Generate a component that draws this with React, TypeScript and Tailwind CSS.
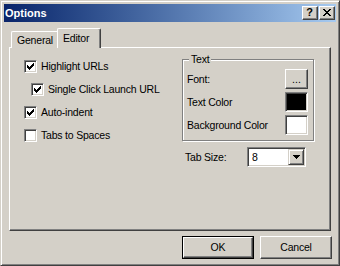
import React from "react";

const FONT = "font-['Liberation_Sans',Arial,sans-serif]";

function CheckMark() {
  const tops = [4, 5, 6, 5, 4, 3, 2];
  return (
    <svg width="11" height="11" shapeRendering="crispEdges" className="block">
      {tops.map((t, i) => (
        <rect key={i} x={2 + i} y={t} width="1" height="3" fill="#000" />
      ))}
    </svg>
  );
}

function Checkbox({ checked }: { checked: boolean }) {
  return (
    <div className="w-[13px] h-[13px] shrink-0 bg-white border border-t-[#808080] border-l-[#808080] border-r-white border-b-white shadow-[inset_1px_1px_0_#404040,inset_-1px_-1px_0_#d4d0c8]">
      {checked && <CheckMark />}
    </div>
  );
}

function CheckRow({ checked, label, indent }: { checked: boolean; label: string; indent?: boolean }) {
  return (
    <div className={`flex items-center h-[13px] ${indent ? "pl-[7px]" : ""}`}>
      <Checkbox checked={checked} />
      <span className="ml-[4px] leading-[13px] whitespace-nowrap">{label}</span>
    </div>
  );
}

function Swatch({ color }: { color: string }) {
  return (
    <div
      className={`w-[23px] h-[20px] border border-t-[#808080] border-l-[#808080] border-r-white border-b-white shadow-[inset_1px_1px_0_#404040,inset_-1px_-1px_0_#d4d0c8] ${color}`}
    />
  );
}

export default function App() {
  return (
    <div
      className={`w-[340px] h-[266px] bg-[#d4d0c8] border border-t-[#d4d0c8] border-l-[#d4d0c8] border-r-[#404040] border-b-[#404040] shadow-[inset_1px_1px_0_#fff,inset_-1px_-1px_0_#808080] p-[3px] flex flex-col text-black text-[10.5px] tracking-[-0.2px] ${FONT}`}
    >
      {/* Title bar */}
      <div className="h-[18px] shrink-0 flex items-center justify-between pl-[1px] pr-[1px] bg-linear-to-r from-[#0a246a] to-[#a6caf0]">
        <span className="text-white font-bold text-[11px] tracking-normal leading-[13px]">Options</span>
        <div className="flex gap-[1px]">
          <div className="w-[16px] h-[14px] bg-[#d4d0c8] border border-t-white border-l-white border-r-[#404040] border-b-[#404040] shadow-[inset_-1px_-1px_0_#808080] flex items-center justify-center">
            <span className="font-bold text-[11px] leading-[11px] tracking-normal -mt-[1px] pr-[1px]">?</span>
          </div>
          <div className="w-[16px] h-[14px] bg-[#d4d0c8] border border-t-white border-l-white border-r-[#404040] border-b-[#404040] shadow-[inset_-1px_-1px_0_#808080] flex items-center justify-center">
            <svg width="8" height="7" viewBox="0 0 8 7" shapeRendering="crispEdges" className="-mt-[1px]">
              {[0, 1, 2, 3, 4, 5, 6].map((i) => (
                <React.Fragment key={i}>
                  <rect x={i} y={i} width="2" height="1" fill="#000" />
                  <rect x={6 - i} y={i} width="2" height="1" fill="#000" />
                </React.Fragment>
              ))}
            </svg>
          </div>
        </div>
      </div>

      {/* Tabs */}
      <div className="flex items-end h-[20px] mt-[6px] ml-[5px] relative z-10">
        <div className="ml-[2px] w-[46px] h-[17px] border-t border-l border-t-white border-l-white rounded-tl-[2px] flex items-start pl-[5px] pt-[2px] bg-[#d4d0c8]">
          <span className="leading-[13px]">General</span>
        </div>
        <div className="w-[44px] h-[20px] border-t border-l border-r border-t-white border-l-white border-r-[#404040] shadow-[inset_-1px_0_0_#808080] rounded-t-[2px] flex items-start pl-[5px] pt-[3px] bg-[#d4d0c8]">
          <span className="leading-[13px]">Editor</span>
        </div>
      </div>

      {/* Panel */}
      <div className="ml-[5px] w-[322px] h-[184px] -mt-[1px] border border-t-white border-l-white border-r-[#404040] border-b-[#404040] shadow-[inset_-1px_-1px_0_#808080] flex">
        <div className="w-[172px] pl-[14px] pt-[12px] flex flex-col gap-[10px]">
          <CheckRow checked label="Highlight URLs" />
          <CheckRow checked indent label="Single Click Launch URL" />
          <CheckRow checked label="Auto-indent" />
          <CheckRow checked={false} label="Tabs to Spaces" />
        </div>
        <div className="pt-[11px] flex flex-col">
          <div className="relative w-[132px] border border-[#808080] shadow-[inset_1px_1px_0_#fff,1px_1px_0_#fff] pt-[9px] pb-[5px] pl-[4px] pr-[5px] flex flex-col gap-[3px]">
            <span className="absolute -top-[7px] left-[6px] px-[2px] bg-[#d4d0c8] leading-[13px]">Text</span>
            <div className="flex items-center justify-between h-[20px]">
              <span className="leading-[13px]">Font:</span>
              <div className="w-[23px] h-[20px] border border-t-white border-l-white border-r-[#404040] border-b-[#404040] shadow-[inset_-1px_-1px_0_#808080] flex items-center justify-center">
                <span className="leading-[13px] tracking-normal">...</span>
              </div>
            </div>
            <div className="flex items-center justify-between h-[20px]">
              <span className="leading-[13px]">Text Color</span>
              <Swatch color="bg-black" />
            </div>
            <div className="flex items-center justify-between h-[20px]">
              <span className="leading-[13px]">Background Color</span>
              <Swatch color="bg-white" />
            </div>
          </div>
          <div className="mt-[6px] flex items-center h-[20px]">
            <span className="w-[65px] pl-[3px] leading-[13px]">Tab Size:</span>
            <div className="w-[59px] h-[20px] bg-white border border-t-[#808080] border-l-[#808080] border-r-white border-b-white shadow-[inset_1px_1px_0_#404040,inset_-1px_-1px_0_#d4d0c8] flex items-stretch p-[1px]">
              <span className="flex-1 pl-[3px] leading-[16px]">8</span>
              <div className="w-[16px] bg-[#d4d0c8] border border-t-[#d4d0c8] border-l-[#d4d0c8] border-r-[#404040] border-b-[#404040] shadow-[inset_1px_1px_0_#fff,inset_-1px_-1px_0_#808080] flex items-center justify-center">
                <svg width="7" height="4" viewBox="0 0 7 4" shapeRendering="crispEdges">
                  <rect x="0" y="0" width="7" height="1" fill="#000" />
                  <rect x="1" y="1" width="5" height="1" fill="#000" />
                  <rect x="2" y="2" width="3" height="1" fill="#000" />
                  <rect x="3" y="3" width="1" height="1" fill="#000" />
                </svg>
              </div>
            </div>
          </div>
        </div>
      </div>

      {/* Buttons */}
      <div className="mt-[5px] flex justify-end gap-[6px] pr-[4px]">
        <div className="w-[72px] h-[23px] border border-black">
          <div className="w-full h-full border border-t-white border-l-white border-r-[#404040] border-b-[#404040] shadow-[inset_-1px_-1px_0_#808080] flex items-center justify-center">
            <span className="leading-[13px]">OK</span>
          </div>
        </div>
        <div className="w-[72px] h-[23px] border border-t-white border-l-white border-r-[#404040] border-b-[#404040] shadow-[inset_-1px_-1px_0_#808080] flex items-center justify-center">
          <span className="leading-[13px]">Cancel</span>
        </div>
      </div>
    </div>
  );
}
